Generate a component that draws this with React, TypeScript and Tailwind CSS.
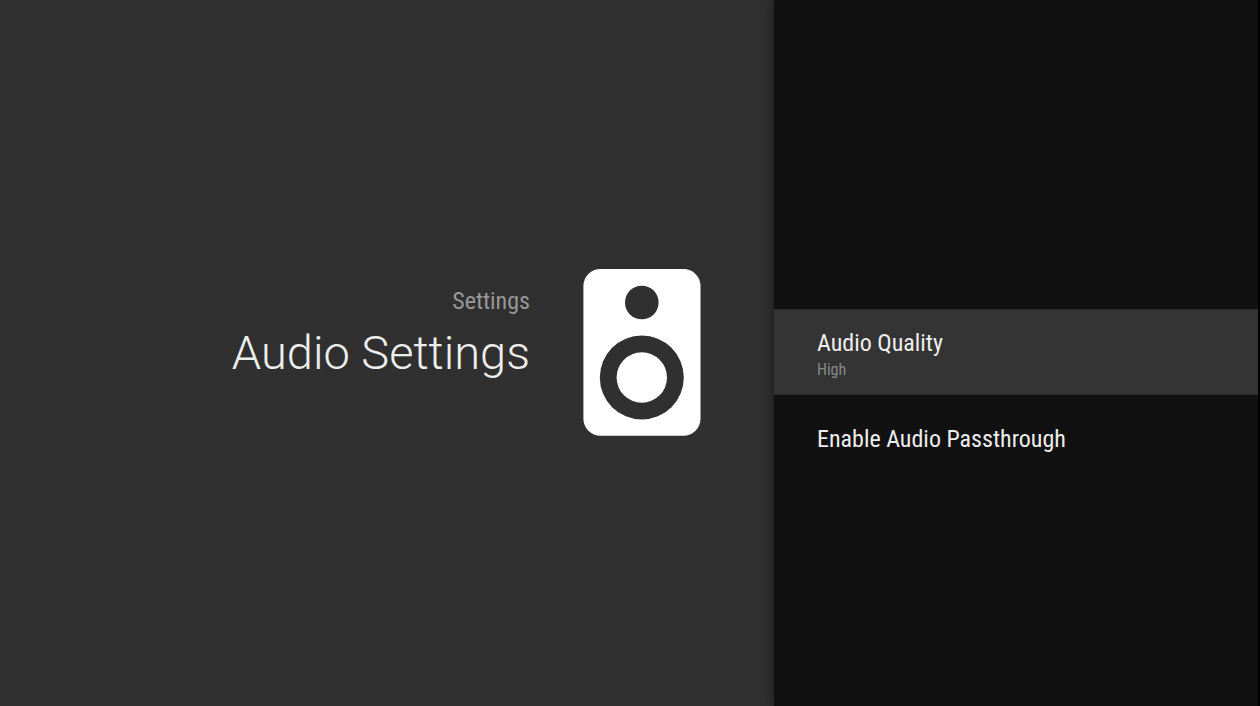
export default function App() {
  return (
    <div className="flex min-h-screen bg-[#303030] font-['Roboto',sans-serif]">
      <main className="flex flex-1 items-center justify-end gap-[53px] pr-[73px]">
        <header className="pb-8 text-right">
          <p className="font-['Roboto_Condensed','Roboto',sans-serif] text-[24px] leading-8 text-[#979797]">Settings</p>
          <h1 className="text-[47px] leading-[72px] font-light text-[#eeeeee]">Audio Settings</h1>
        </header>
        <svg className="h-[168px] w-[118px]" viewBox="0 0 118 168" aria-hidden="true">
          <rect x="0.4" width="117.1" height="166.8" rx="17" fill="#fff" />
          <circle cx="58.8" cy="33.5" r="16.8" fill="#303030" />
          <circle cx="58.8" cy="108.5" r="42" fill="#303030" />
          <circle cx="58.8" cy="108.5" r="25.2" fill="#fff" />
        </svg>
      </main>
      <aside className="grid w-[486px] grid-rows-[1fr_auto_1fr] border-r-2 border-black bg-[#111111] pb-0.5 font-['Roboto_Condensed','Roboto',sans-serif] shadow-[0_0_12px_rgba(0,0,0,0.5)]">
        <button type="button" className="row-start-2 border-y border-[#2b2b2b] bg-[#343434] px-[43px] pt-[17px] pb-[13px] text-left">
          <span className="block text-[24px] leading-8 text-[#eeeeee]">Audio Quality</span>
          <span className="block text-[16px] leading-[22px] text-[#8a8a8a]">High</span>
        </button>
        <button type="button" className="row-start-3 self-start px-[43px] py-7 text-left text-[24px] leading-8 text-[#eeeeee]">
          Enable Audio Passthrough
        </button>
      </aside>
    </div>
  );
}
